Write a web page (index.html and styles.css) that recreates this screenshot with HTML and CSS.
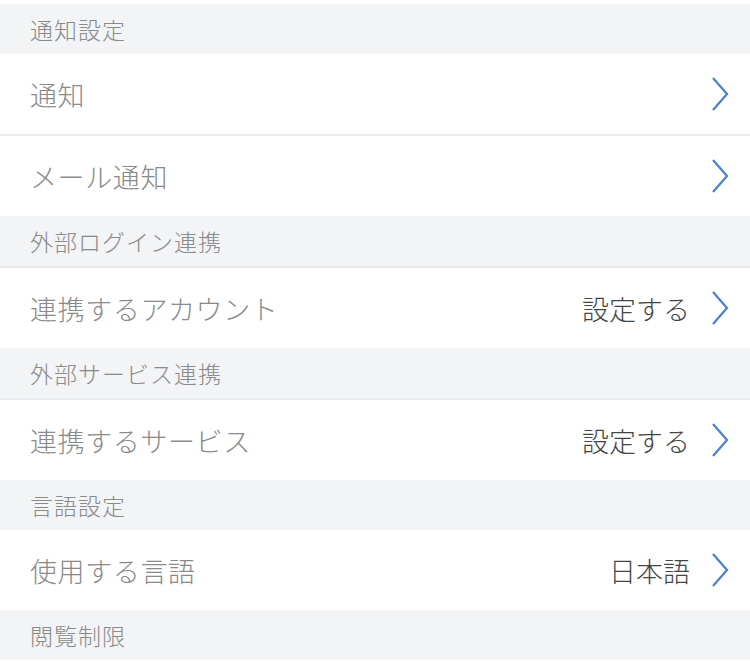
FILE: index.html
```html
<!DOCTYPE html>
<html>
<head>
  <meta charset="utf-8">
  <title>設定</title>
  <link rel="stylesheet" href="styles.css">
</head>
<body>

  <div class="settings">
    <div class="section-title">通知設定</div>
    <div class="row">
      <span class="row-label">通知</span>
      <span class="row-right">
        <svg class="chevron" viewBox="0 0 18 34"><polyline points="2,1 16,17 2,33"/></svg>
      </span>
    </div>
    <div class="row row-border">
      <span class="row-label">メール通知</span>
      <span class="row-right">
        <svg class="chevron" viewBox="0 0 18 34"><polyline points="2,1 16,17 2,33"/></svg>
      </span>
    </div>

    <div class="section-title">外部ログイン連携</div>
    <div class="row row-border">
      <span class="row-label">連携するアカウント</span>
      <span class="row-right">
        <span class="row-value">設定する</span>
        <svg class="chevron" viewBox="0 0 18 34"><polyline points="2,1 16,17 2,33"/></svg>
      </span>
    </div>

    <div class="section-title">外部サービス連携</div>
    <div class="row row-border">
      <span class="row-label">連携するサービス</span>
      <span class="row-right">
        <span class="row-value">設定する</span>
        <svg class="chevron" viewBox="0 0 18 34"><polyline points="2,1 16,17 2,33"/></svg>
      </span>
    </div>

    <div class="section-title">言語設定</div>
    <div class="row">
      <span class="row-label">使用する言語</span>
      <span class="row-right">
        <span class="row-value">日本語</span>
        <svg class="chevron" viewBox="0 0 18 34"><polyline points="2,1 16,17 2,33"/></svg>
      </span>
    </div>

    <div class="section-title">閲覧制限</div>
  </div>

</body>
</html>
```

FILE: styles.css
```css
body {
  margin: 0;
  font-family: "Noto Sans CJK JP", "Noto Sans", sans-serif;
  background-color: #fff;
  color: #888;
}

.settings {
  padding-top: 4px;
}

.section-title {
  height: 50px;
  display: flex;
  align-items: center;
  padding-left: 30px;
  background-color: #f2f4f5;
  color: #8a8a8a;
  font-size: 23px;
  font-weight: 300;
  letter-spacing: 1px;
}

.row {
  height: 80px;
  display: flex;
  align-items: center;
  justify-content: space-between;
  padding: 0 21px 0 30px;
  background: white;
}

.row-border {
  border-top: 2px solid #e8eaeb;
}

.row-label {
  font-size: 27px;
  font-weight: 300;
  letter-spacing: 0.6px;
  color: #8a8a8a;
}

.row-right {
  display: flex;
  align-items: center;
  gap: 21px;
}

.row-value {
  font-size: 27px;
  font-weight: 300;
  color: #444;
}

.chevron {
  width: 18px;
  height: 34px;
  fill: none;
  stroke: #4a7fd0;
  stroke-width: 2.2;
}
```
